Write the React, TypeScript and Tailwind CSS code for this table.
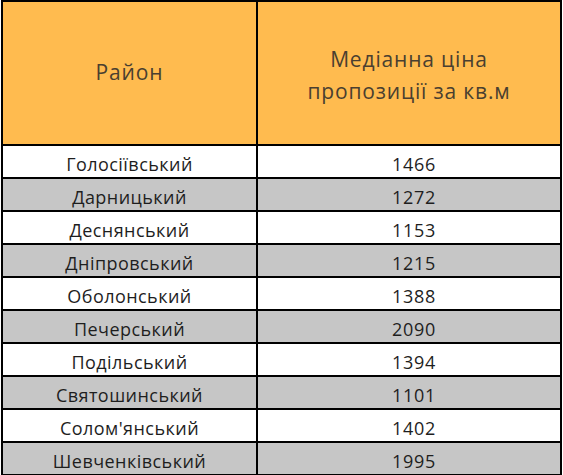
const rows: [string, string][] = [
  ["Голосіївський", "1466"],
  ["Дарницький", "1272"],
  ["Деснянський", "1153"],
  ["Дніпровський", "1215"],
  ["Оболонський", "1388"],
  ["Печерський", "2090"],
  ["Подільський", "1394"],
  ["Святошинський", "1101"],
  ["Солом'янський", "1402"],
  ["Шевченківський", "1995"],
];

export default function App() {
  return (
    <div className="w-[563px] h-[475px] bg-white pl-px font-['Open_Sans',sans-serif]">
      <table className="border-collapse w-[561px] table-fixed">
        <thead>
          <tr className="h-[144px] bg-[#ffbb4f]">
            <th className="w-[255px] border-2 border-black font-normal text-[21px] tracking-[0.04em] text-[#4a3f30]">Район</th>
            <th className="border-2 border-black font-normal text-[21px] tracking-[0.04em] leading-[32px] text-[#4a3f30] pt-1">
              Медіанна ціна
              <br />
              пропозиції за кв.м
            </th>
          </tr>
        </thead>
        <tbody>
          {rows.map(([name, price], i) => (
            <tr key={name} className={`h-[33px] ${i % 2 ? "bg-[#c6c6c6]" : "bg-white"}`}>
              <td className="border-2 border-black text-center text-[18px] tracking-[0.025em] leading-none pt-[5px] text-[#1e1e1e]">{name}</td>
              <td className="border-2 border-black text-center text-[18px] tracking-[0.04em] leading-none pt-[5px] pl-[10px] text-[#1e1e1e]">{price}</td>
            </tr>
          ))}
        </tbody>
      </table>
    </div>
  );
}
